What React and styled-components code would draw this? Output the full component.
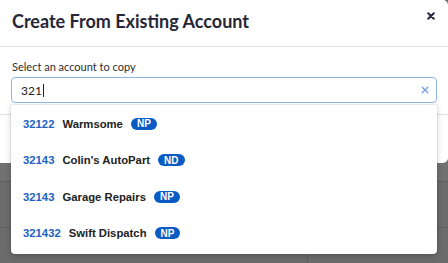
import { useState } from "react";
import styled, { createGlobalStyle } from "styled-components";

const GlobalStyle = createGlobalStyle`
  html, body {
    margin: 0;
    padding: 0;
    background: #6b6b6b;
    overflow: hidden;
  }
  * { box-sizing: border-box; }
`;

const accounts = [
  { id: 1, number: "32122", name: "Warmsome", tag: "NP" },
  { id: 2, number: "32143", name: "Colin's AutoPart", tag: "ND" },
  { id: 3, number: "32143", name: "Garage Repairs", tag: "NP" },
  { id: 4, number: "321432", name: "Swift Dispatch", tag: "NP" },
];

const Page = styled.div`
  width: 448px;
  height: 263px;
  position: relative;
  display: flex;
  flex-direction: column;
`;

const Modal = styled.div`
  background: #fff;
  height: 163px;
  border-radius: 0 5px 5px 0;
  display: flex;
  flex-direction: column;
  font-family: Lato, "Liberation Sans", sans-serif;
  position: relative;
  z-index: 2;
`;

const Header = styled.div`
  height: 47px;
  border-bottom: 1px solid #e2e2e2;
  display: flex;
  align-items: center;
  justify-content: space-between;
  padding: 0 12px 4px 12px;
`;

const Title = styled.h2`
  margin: 0;
  font-size: 18px;
  font-weight: 700;
  color: #262637;
`;

const Close = styled.button`
  border: 0;
  background: none;
  padding: 0;
  margin-top: -10px;
  width: 10px;
  height: 10px;
  display: flex;
  align-items: center;
  justify-content: center;
  cursor: pointer;
`;

const Body = styled.div`
  padding: 13px 11px 0 11px;
  height: 68px;
  border-bottom: 1px solid #e2e2e2;
`;

const Label = styled.label`
  display: block;
  font-size: 11px;
  color: #2d2d2d;
  padding-left: 1px;
  margin-bottom: 4px;
`;

const Field = styled.div`
  position: relative;
`;

const Input = styled.div`
  height: 26px;
  border: 1px solid #8fb4ec;
  border-radius: 4px;
  display: flex;
  align-items: center;
  justify-content: space-between;
  padding: 0 7px 0 9px;
  font-size: 12px;
  color: #222;
`;

const Caret = styled.span`
  display: inline-block;
  width: 1px;
  height: 13px;
  background: #222;
  margin-left: 1px;
  vertical-align: -2px;
`;

const Menu = styled.ul`
  position: absolute;
  top: 28px;
  left: 0;
  right: 0;
  margin: 0;
  padding: 0 0 3px 0;
  list-style: none;
  background: #fff;
  border-radius: 0 0 4px 4px;
  box-shadow: 0 2px 6px rgba(0, 0, 0, 0.18), 0 0 0 1px rgba(0, 0, 0, 0.05);
  font-family: "Liberation Sans", Arial, sans-serif;
  z-index: 3;
`;

const Option = styled.li`
  height: 36.5px;
  display: flex;
  align-items: center;
  gap: 8px;
  padding-left: 12px;
  padding-top: 1px;
  font-size: 11.3px;
  font-weight: 700;
  cursor: pointer;
`;

const Number = styled.span`
  color: #1b63c6;
`;

const Name = styled.span`
  color: #222;
`;

const Tag = styled.span`
  background: #0b5bc4;
  color: #fff;
  font-size: 10px;
  font-weight: 700;
  height: 12px;
  padding: 0 6px;
  border-radius: 7px;
  display: inline-flex;
  align-items: center;
  justify-content: center;
  min-width: 25px;
`;

const Footer = styled.div`
  flex: 1;
`;

const Backdrop = styled.div`
  flex: 1;
  display: flex;
  flex-direction: column;
`;

const BackRow = styled.div`
  height: ${(p) => p.h}px;
  background: ${(p) => p.bg};
  border-bottom: 1px solid #5f5f5f;
`;

const BackDivider = styled.div`
  flex: 1;
  background: #6b6b6b;
  display: flex;
  justify-content: flex-start;
  padding-left: 307px;
`;

const VLine = styled.div`
  width: 1px;
  margin-top: 27px;
  background: #5c5c5c;
`;

const CloseIcon = ({ color, size = 8, stroke = 2.2 }) => (
  <svg width={size} height={size} viewBox="0 0 10 10">
    <path d="M1.5 1.5 L8.5 8.5 M8.5 1.5 L1.5 8.5" stroke={color} strokeWidth={stroke} strokeLinecap="round" />
  </svg>
);

export default function App() {
  const [query] = useState("321");
  return (
    <Page>
      <GlobalStyle />
      <Modal>
        <Header>
          <Title>Create From Existing Account</Title>
          <Close aria-label="close">
            <CloseIcon color="#262637" size={8} stroke={2.4} />
          </Close>
        </Header>
        <Body>
          <Label>Select an account to copy</Label>
          <Field>
            <Input>
              <span>
                {query}
                <Caret />
              </span>
              <CloseIcon color="#6d9fe2" size={8} stroke={1.6} />
            </Input>
            <Menu>
              {accounts.map((a) => (
                <Option key={a.id}>
                  <Number>{a.number}</Number>
                  <Name>{a.name}</Name>
                  <Tag>{a.tag}</Tag>
                </Option>
              ))}
            </Menu>
          </Field>
        </Body>
        <Footer />
      </Modal>
      <Backdrop>
        <BackRow h={19} bg="#717171" />
        <BackRow h={46} bg="#6b6b6b" />
        <BackDivider>
          <VLine />
        </BackDivider>
      </Backdrop>
    </Page>
  );
}
